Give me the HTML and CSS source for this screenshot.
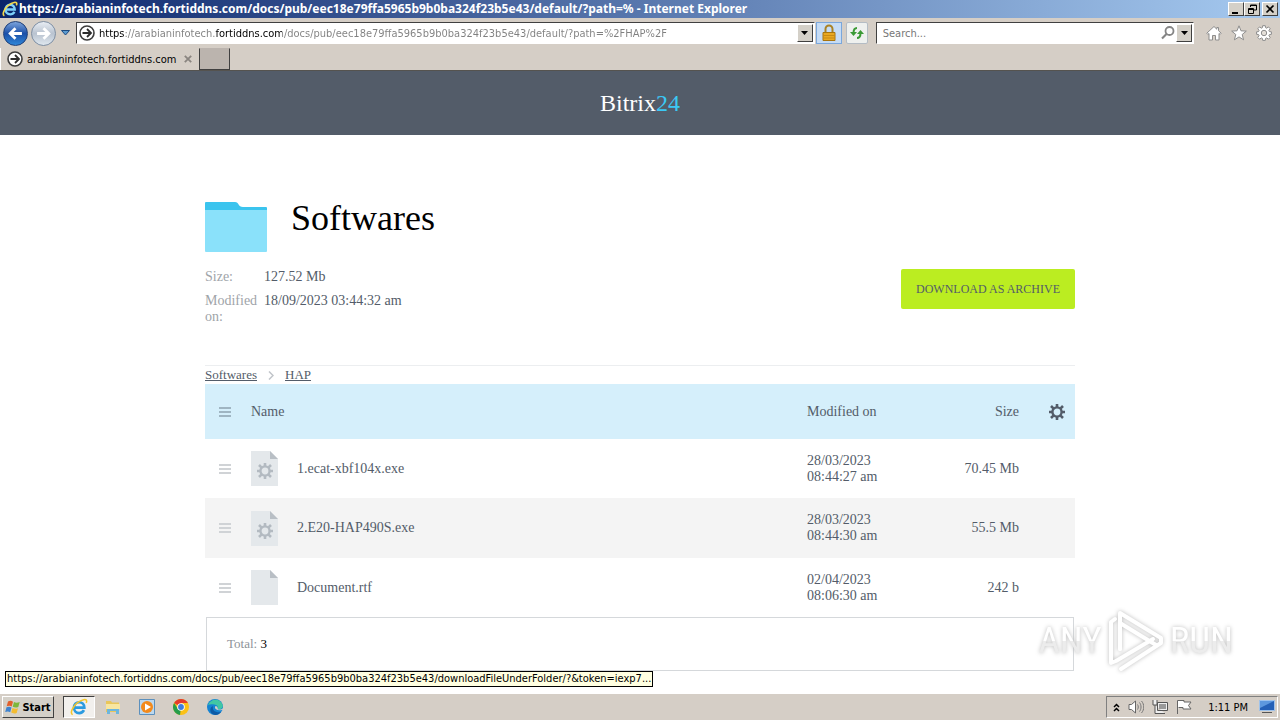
FILE: index.html
```html
<!DOCTYPE html>
<html lang="en">
<head>
  <meta charset="UTF-8">
  <title>Bitrix24 - Softwares</title>
  <link rel="stylesheet" href="styles.css">
</head>
<body>
  <svg class="symbols" aria-hidden="true">
    <symbol id="gear" viewBox="0 0 16 16">
      <g fill="none" stroke="currentColor">
        <circle cx="8" cy="8" r="4.6" stroke-width="2.4"/>
        <path stroke-width="2.6" d="M8 0v3M8 13v3M0 8h3M13 8h3M2 2l2.400 2.400M11.600 11.600l2.400 2.400M14 2l-2.400 2.400M4.400 11.600l-2.400 2.400"/>
      </g>
    </symbol>
    <symbol id="go" viewBox="0 0 16 16">
      <circle cx="8" cy="8" r="7" fill="#fff" stroke="#3c3c3c" stroke-width="1.6"/>
      <path d="M3.5 8h8M8 4l4 4-4 4" fill="none" stroke="#2c2c2c" stroke-width="1.8"/>
    </symbol>
    <symbol id="file" viewBox="0 0 27 35">
      <path fill="#e4e8eb" d="M0 0h19l8 8v27H0z"/>
      <path fill="#b9bfc5" d="M19 0l8 8h-8z"/>
    </symbol>
    <symbol id="ie" viewBox="0 0 20 20">
      <path d="M15.5 13.5c-1 2-3 3.200-5.300 3.200-3.300 0-5.800-2.600-5.800-6s2.500-6 5.800-6 5.700 2.500 5.700 6H5" fill="none" stroke="#2b9be0" stroke-width="3"/>
      <path d="M3 18.500C-.5 17 3 9.500 8 5.500S18.500.5 18.500 3.500c0 .8-.3 1.500-.6 2" fill="none" stroke="#f3c62c" stroke-width="1.700"/>
    </symbol>
    <symbol id="e-title" viewBox="0 0 20 20">
      <path d="M15.500 13.500c-1 2-3 3.200-5.300 3.200-3.300 0-5.800-2.600-5.800-6s2.500-6 5.800-6 5.700 2.500 5.700 6H5" fill="none" stroke="#7cd0fa" stroke-width="3"/>
      <path d="M3 18.500C-.5 17 3 9.500 8 5.500S18.500.5 18.500 3.500c0 .8-.3 1.500-.6 2" fill="none" stroke="#f3d84c" stroke-width="2"/>
    </symbol>
  </svg>

  <div class="titlebar">
    <svg class="icon16" viewBox="0 0 16 16"><use href="#e-title"/></svg>
    <span class="window-title">https://arabianinfotech.fortiddns.com/docs/pub/eec18e79ffa5965b9b0ba324f23b5e43/default/?path=% - Internet Explorer</span>
    <div class="window-buttons">
      <button class="win-btn" aria-label="Minimize"><svg viewBox="0 0 12 10"><path d="M2 8h6v2H2z"/></svg></button>
      <button class="win-btn" aria-label="Restore"><svg viewBox="0 0 12 10"><path fill="none" stroke="#000" d="M4.500 3V1h6v5H8M4 1.500h7M2.500 4.500h5v5h-5zM2 5.500h6"/></svg></button>
      <button class="win-btn close" aria-label="Close"><svg viewBox="0 0 12 10"><path fill="none" stroke="#000" stroke-width="1.700" d="M2.500 1.500l7 7M9.500 1.500l-7 7"/></svg></button>
    </div>
  </div>

  <div class="toolbar">
    <div class="history">
      <button class="nav-btn back" aria-label="Back"><svg viewBox="0 0 14 14"><path d="M7 2L2 7l5 5M2 7h11" fill="none" stroke="#fff" stroke-width="2.600"/></svg></button>
      <button class="nav-btn forward" aria-label="Forward"><svg viewBox="0 0 14 14"><path d="M7 2l5 5-5 5M12 7H1" fill="none" stroke="#fff" stroke-width="2.600"/></svg></button>
      <button class="recent" aria-label="Recent pages"><svg viewBox="0 0 9 6"><path d="M.5.5h8l-4 4.500z" fill="#5b9bd0" stroke="#1b4a80"/></svg></button>
    </div>
    <div class="field address">
      <svg class="icon16" viewBox="0 0 16 16"><use href="#go"/></svg>
      <input class="url" type="text" aria-label="Address" value="https://arabianinfotech.fortiddns.com/docs/pub/eec18e79ffa5965b9b0ba324f23b5e43/default/?path=%2FHAP%2F">
      <button class="drop" aria-label="Show address list"><svg viewBox="0 0 7 4"><path d="M0 0h7L3.500 4z"/></svg></button>
    </div>
    <button class="tool lock" aria-label="Security report"><svg viewBox="0 0 16 18"><path d="M4.500 9V5a3.500 3.500 0 0 1 7 0v4" fill="none" stroke="#a98225" stroke-width="2"/><path fill="#e9a820" stroke="#a8740f" d="M2 8.500h12v8H2z"/><path stroke="#c98a12" d="M2 11.500h12M2 14h12"/></svg></button>
    <button class="tool refresh" aria-label="Refresh"><svg viewBox="0 0 16 14"><path d="M8 2C5.500 2 4.500 3.500 4.500 7M8 12c2.500 0 3.500-1.500 3.500-5" fill="none" stroke="#3a9a35" stroke-width="2"/><path fill="#3a9a35" d="M1 6h7l-3.500 4zM8 8h7l-3.500-4z"/></svg></button>
    <div class="field search">
      <input type="text" aria-label="Search" placeholder="Search...">
      <svg class="icon16" viewBox="0 0 16 16"><circle cx="9.500" cy="6" r="4" fill="none" stroke="#858585" stroke-width="1.800"/><path d="M6.500 9L2 13.500" stroke="#858585" stroke-width="2.200"/></svg>
      <button class="drop" aria-label="Search options"><svg viewBox="0 0 7 4"><path d="M0 0h7L3.500 4z"/></svg></button>
    </div>
    <div class="commands">
      <button aria-label="Home"><svg viewBox="0 0 16 16"><path fill="#fff" stroke="#8d8d8d" d="M8 1.500L.8 8.200l1 1.200L3 8.500V15h3.500v-4.500h3V15H13V8.500l1.200.9 1-1.200-2.700-2.500V2.500h-1.700v1.700z"/></svg></button>
      <button aria-label="Favorites"><svg viewBox="0 0 16 16"><path fill="#fff" stroke="#8d8d8d" d="M8 .8l2 5 5.300.3-4.100 3.400 1.400 5.300L8 11.900l-4.600 2.900 1.400-5.300L.7 6.100 6 5.800z"/></svg></button>
      <button aria-label="Tools"><svg viewBox="0 0 16 16"><path fill="#fff" stroke="#8d8d8d" d="M6.700.7h2.600l.3 2 1.100.5 1.700-1.300 1.800 1.800-1.300 1.700.5 1.200 2 .2v2.500l-2 .3-.5 1.100 1.300 1.700-1.800 1.800-1.700-1.300-1.100.5-.3 2H6.700l-.3-2-1.100-.5-1.700 1.300-1.800-1.800 1.300-1.700-.5-1.100-2-.3V6.800l2-.2.5-1.200-1.300-1.700 1.800-1.800 1.700 1.300 1.100-.5z"/><circle cx="8" cy="8" r="2.700" fill="#e4dfd8" stroke="#8d8d8d"/></svg></button>
    </div>
  </div>

  <div class="tabs">
    <div class="tab">
      <svg class="icon16" viewBox="0 0 16 16"><use href="#go"/></svg>
      <span>arabianinfotech.fortiddns.com</span>
      <button class="tab-close" aria-label="Close tab"><svg viewBox="0 0 8 8"><path d="M.8.8l6.400 6.400M7.200.8L.8 7.200" stroke="#8a8580" stroke-width="1.800"/></svg></button>
    </div>
    <button class="new-tab" aria-label="New tab"></button>
  </div>

  <div class="page">
    <header class="site-header">
      <span class="logo">Bitrix<span>24</span></span>
    </header>

    <main class="content">
      <div class="folder-title">
        <svg viewBox="0 0 62 50"><path fill="#3bc4ee" d="M0 1a1 1 0 0 1 1-1h29c4 0 3 5 8 5h23a1 1 0 0 1 1 1v6H0z"/><path fill="#8ae1fa" d="M0 8h62v41a1 1 0 0 1-1 1H1a1 1 0 0 1-1-1z"/></svg>
        <h1>Softwares</h1>
      </div>

      <div class="info">
        <dl>
          <dt>Size:</dt><dd>127.52 Mb</dd>
          <dt>Modified on:</dt><dd>18/09/2023 03:44:32 am</dd>
        </dl>
        <a class="download" href="#">DOWNLOAD AS ARCHIVE</a>
      </div>

      <nav class="breadcrumbs">
        <a href="#">Softwares</a>
        <svg viewBox="0 0 6 9"><path d="M1 .5l4 4-4 4" fill="none" stroke="#c0c4c9" stroke-width="1.500"/></svg>
        <a href="#">HAP</a>
      </nav>

      <table class="files">
        <thead>
          <tr>
            <th class="menu"><svg class="lines" viewBox="0 0 12 10"><path d="M0 1h12M0 5h12M0 9h12"/></svg></th>
            <th>Name</th>
            <th class="date">Modified on</th>
            <th class="size">Size</th>
            <th class="settings"><button aria-label="Settings"><svg viewBox="0 0 16 16"><use href="#gear"/></svg></button></th>
          </tr>
        </thead>
        <tbody>
          <tr>
            <td class="menu"><svg class="lines" viewBox="0 0 12 10"><path d="M0 1h12M0 5h12M0 9h12"/></svg></td>
            <td><div class="name"><svg class="file-icon" viewBox="0 0 27 35"><use href="#file"/><use href="#gear" x="6" y="12" width="16" height="16"/></svg><span>1.ecat-xbf104x.exe</span></div></td>
            <td class="date">28/03/2023<br>08:44:27 am</td>
            <td class="size">70.45 Mb</td>
            <td></td>
          </tr>
          <tr>
            <td class="menu"><svg class="lines" viewBox="0 0 12 10"><path d="M0 1h12M0 5h12M0 9h12"/></svg></td>
            <td><div class="name"><svg class="file-icon" viewBox="0 0 27 35"><use href="#file"/><use href="#gear" x="6" y="12" width="16" height="16"/></svg><span>2.E20-HAP490S.exe</span></div></td>
            <td class="date">28/03/2023<br>08:44:30 am</td>
            <td class="size">55.5 Mb</td>
            <td></td>
          </tr>
          <tr>
            <td class="menu"><svg class="lines" viewBox="0 0 12 10"><path d="M0 1h12M0 5h12M0 9h12"/></svg></td>
            <td><div class="name"><svg class="file-icon" viewBox="0 0 27 35"><use href="#file"/></svg><span>Document.rtf</span></div></td>
            <td class="date">02/04/2023<br>08:06:30 am</td>
            <td class="size">242 b</td>
            <td></td>
          </tr>
        </tbody>
      </table>
      <div class="total">Total: <b>3</b></div>
    </main>

    <div class="watermark">
      <span>ANY</span>
      <svg viewBox="0 0 58 64"><g fill="none" stroke="#fff" stroke-width="4" stroke-linejoin="round" stroke-linecap="round"><path d="M13 40V4l41 25v5L14 60"/><path d="M13 14l36 22M13 40V20"/><path d="M8 10l-4 3v41l5-2 37-22"/></g></svg>
      <span>RUN</span>
    </div>
    <div class="status">https://arabianinfotech.fortiddns.com/docs/pub/eec18e79ffa5965b9b0ba324f23b5e43/downloadFileUnderFolder/?&amp;token=iexp7...</div>
  </div>

  <footer class="taskbar">
    <button class="start"><svg viewBox="0 0 16 16"><path fill="#e2602c" d="M3 2.500c2-1 3.500-.8 5 .2L6.700 7.500c-1.500-1-3-1-5-.3z"/><path fill="#7db73b" d="M9 3c1.500 1 3.500 1 5.700 0L13.300 8C11 8.800 9.500 8.600 7.700 7.700z"/><path fill="#3f83cf" d="M1.500 8.300c2-.7 3.500-.7 5 .3l-1.300 4.700c-1.700-1-3-1-5-.2z"/><path fill="#f3bc31" d="M7.500 9c1.700.8 3.300 1 5.500.2l-1.300 4.700c-2 .8-4 .6-5.500-.3z"/></svg>Start</button>
    <button class="task active" aria-label="Internet Explorer"><svg viewBox="0 0 16 16"><use href="#ie"/></svg></button>
    <button class="task" aria-label="Explorer"><svg viewBox="0 0 16 16"><path fill="#e9c65a" d="M1 2h5l1 1.500h7V13H1z"/><path fill="#f8e6a0" d="M1 5h14v5H1z"/><path fill="#6db6dd" d="M2 15v-5h12v5h-3v-3H5v3z"/></svg></button>
    <button class="task" aria-label="Media Player"><svg viewBox="0 0 16 16"><path fill="#bcd8ee" stroke="#5c90bd" d="M.5.5h15v15H.5z"/><circle cx="8" cy="8" r="6" fill="#f38a1b"/><path fill="#fff" d="M6 4.500v7L12 8z"/></svg></button>
    <button class="task" aria-label="Chrome"><svg viewBox="0 0 16 16"><circle cx="8" cy="8" r="8" fill="#fbc116"/><path fill="#e33b2e" d="M8 8L1.100 4A8 8 0 0 1 14.900 4H8z"/><path fill="#269d4c" d="M8 8l-1 8A8 8 0 0 1 1.100 4L5 10z"/><circle cx="8" cy="8" r="3.800" fill="#fff"/><circle cx="8" cy="8" r="2.900" fill="#3d7de0"/></svg></button>
    <button class="task" aria-label="Edge"><svg viewBox="0 0 16 16"><circle cx="8" cy="8" r="8" fill="#1583d2"/><path fill="#41c7a4" d="M1 6C3 0 13-2 15.700 6c.6 3-2 5-5.200 4 1-2 0-4-3-4.500C5 5 3 5 1 6z"/><path fill="#0d5aa5" d="M6 7c-1 4 2 7 8 6-3 4-8 3.500-10 .5C2.500 11 3.500 8 6 7z"/><path fill="#d5d0c8" d="M8.500 7c-1.500 2 0 5 6.500 4l1.500-.5V8.500c-1 1.800-3.500 2.500-5.700 1.700C11 8.500 10 7 8.500 7z"/></svg></button>
    <div class="tray">
      <svg class="more" viewBox="0 0 7 9"><path d="M1 4l2.500-2.500L6 4M1 8l2.500-2.500L6 8" fill="none" stroke="#000" stroke-width="1.500"/></svg>
      <svg class="icon16" viewBox="0 0 16 16"><path fill="#fff" stroke="#666" d="M1 5.500h2.500L7.500 2v12l-4-3.500H1z"/><path fill="none" stroke="#777" d="M9.500 5.500c1 1.500 1 3.500 0 5M11.500 3.500c2 2.500 2 6.500 0 9M13.500 2c3 3.500 3 8.500 0 12"/></svg>
      <svg class="icon16" viewBox="0 0 16 16"><path fill="#eee" stroke="#555" d="M5.500 3.500h10v8h-10zM1 1v5h4V1M3 6v8.500h10"/><path fill="#999" d="M7 5h7v5H7z"/></svg>
      <svg class="icon16" viewBox="0 0 16 16"><path fill="#fff" stroke="#666" d="M1.500 15V1.500H8V3h7l-2.500 3.500L15 10H7V8.500H2.500"/></svg>
      <span class="clock">1:11 PM</span>
      <button class="show-desktop" aria-label="Show desktop"><svg viewBox="0 0 16 14"><path fill="#2561b7" stroke="#9fc3ec" d="M.5.500h15v10H.5z"/><path fill="#5d98de" d="M1 1h14L1 8z"/><path fill="#555" d="M3 12h10v1H3z"/></svg></button>
    </div>
  </footer>
</body>
</html>
```

FILE: styles.css
```css
* {
  box-sizing: border-box;
}

body {
  margin: 0;
  height: 100vh;
  display: flex;
  flex-direction: column;
  overflow: hidden;
  font-family: "DejaVu Sans Condensed", "DejaVu Sans", sans-serif;
  font-size: 11px;
  color: #000;
  background-color: #d5cec6;
}

button {
  display: flex;
  align-items: center;
  justify-content: center;
  padding: 0;
  border: none;
  background: none;
  font: inherit;
}

svg {
  display: block;
  flex: none;
}

.symbols {
  position: absolute;
  width: 0;
  height: 0;
}

.icon16 {
  width: 16px;
  height: 16px;
}

/* window frame */
.titlebar {
  display: flex;
  align-items: center;
  height: 18px;
  padding: 0 2px;
  gap: 1px;
  background: linear-gradient(to right, #0a246a, #a6caf0);
  color: #fff;
  font-weight: bold;
}

.window-title {
  flex: 1;
  overflow: hidden;
  font-family: "Noto Sans", sans-serif;
  font-size: 12px;
  line-height: 18px;
  white-space: nowrap;
}

.window-buttons {
  display: flex;
}

.win-btn,
.drop,
.start {
  background-color: #d4d0c8;
  border: 1px solid;
  border-color: #fff #404040 #404040 #fff;
}

.win-btn {
  width: 16px;
  height: 14px;
}

.win-btn svg {
  width: 12px;
  height: 10px;
}

.close {
  margin-left: 2px;
}

.toolbar {
  display: flex;
  align-items: center;
  height: 30px;
  padding: 0 8px 0 3px;
}

.history {
  display: flex;
  align-items: center;
  width: 73px;
  gap: 3px;
}

.nav-btn {
  width: 25px;
  height: 25px;
  border: 1px solid #7d8ea3;
  border-radius: 50%;
}

.nav-btn svg {
  width: 15px;
  height: 15px;
}

.back {
  background: linear-gradient(#7ba3dc, #1c50a8 50%, #2f86d8);
  border-color: #1f3f78;
}

.forward {
  background: linear-gradient(#e8edf3, #b9c3d0 50%, #dfe7ee);
}

.recent {
  margin-left: 2px;
}

.recent svg {
  width: 9px;
  height: 6px;
}

.field {
  display: flex;
  align-items: center;
  height: 22px;
  padding: 0 1px 0 2px;
  background-color: #fff;
  border: 1px solid;
  border-color: #404040 #fff #fff #404040;
}

.field input {
  flex: 1;
  min-width: 0;
  padding: 0 4px;
  border: none;
  outline: none;
  font: inherit;
}

.address {
  flex: 740;
}

/* the registered domain is darker than the rest of the address */
.address .url {
  background: linear-gradient(to right, #000 30px, #808080 30px, #808080 120px, #000 120px, #000 187px, #808080 187px);
  background-clip: text;
  -webkit-background-clip: text;
  -webkit-text-fill-color: transparent;
}

.search {
  flex: 316;
  margin-left: 8px;
}

.search input::placeholder {
  color: #777;
}

.drop {
  width: 16px;
  height: 18px;
}

.drop svg {
  width: 7px;
  height: 4px;
}

.tool {
  height: 22px;
  border: 1px solid #b4bcc4;
}

.lock {
  width: 26px;
  margin-left: 1px;
  background-color: #c6dcf5;
  border-color: #7aa7dc;
}

.lock svg {
  width: 16px;
  height: 18px;
}

.refresh {
  width: 22px;
  margin-left: 4px;
  background-color: #eef0ee;
  border-radius: 2px;
}

.refresh svg {
  width: 16px;
  height: 14px;
}

.commands {
  display: flex;
  gap: 9px;
  margin-left: 12px;
}

.commands svg {
  width: 16px;
  height: 16px;
}

.tabs {
  display: flex;
  height: 23px;
  border-bottom: 1px solid #55534f;
}

.tab {
  display: flex;
  align-items: center;
  width: 199px;
  padding: 0 7px 0 6px;
  gap: 4px;
  border-left: 1px solid #fff;
}

.tab-close {
  margin-left: auto;
}

.tab-close svg {
  width: 8px;
  height: 8px;
}

.new-tab {
  width: 31px;
  background-color: #bbb4ae;
  border: 1px solid #404040;
  border-top-color: #bbb4ae;
}

/* page */
.page {
  position: relative;
  flex: 1;
  overflow: hidden;
  background-color: #fff;
  font-family: "Liberation Serif", serif;
  font-size: 14px;
  line-height: 16px;
  color: #535c69;
}

.site-header {
  display: flex;
  align-items: center;
  justify-content: center;
  height: 64px;
  background-color: #535c69;
}

.logo {
  font-size: 24px;
  line-height: 28px;
  color: #fff;
}

.logo span {
  color: #3bc8f5;
}

.content {
  max-width: 870px;
  margin: 0 auto;
  padding-top: 61px;
}

.folder-title {
  display: flex;
  align-items: flex-end;
  gap: 24px;
}

.folder-title svg {
  width: 62px;
  height: 50px;
}

.folder-title h1 {
  margin: 0;
  padding-bottom: 11px;
  font-size: 36px;
  font-weight: normal;
  line-height: 45px;
  color: #000;
}

.info {
  display: flex;
  align-items: flex-start;
  justify-content: space-between;
  padding: 17px 0 40px;
}

.info dl {
  display: grid;
  grid-template-columns: 53px auto;
  gap: 8px 6px;
  margin: 0;
}

.info dt {
  color: #a0a4a9;
}

.info dd {
  margin: 0;
}

.download {
  padding: 12px 15px;
  border-radius: 2px;
  background-color: #bbed21;
  color: #535c69;
  font-size: 12px;
  text-decoration: none;
}

.breadcrumbs {
  display: flex;
  align-items: center;
  gap: 11px;
  height: 19px;
  border-top: 1px solid #eceef0;
  font-size: 13px;
}

.breadcrumbs a {
  color: #535c69;
}

.breadcrumbs svg {
  width: 6px;
  height: 9px;
}

.files {
  width: 100%;
  border-collapse: collapse;
}

.files th {
  height: 55px;
  padding: 0;
  background-color: #d5effb;
  font-weight: normal;
  text-align: left;
}

.files td {
  height: 59px;
  padding: 0;
}

.files tbody tr:nth-child(even) {
  background-color: #f4f4f4;
}

.files tbody tr:nth-child(even) td {
  height: 60px;
}

.files .menu {
  width: 46px;
  padding-left: 14px;
}

.lines {
  width: 12px;
  height: 10px;
  stroke: #d0d3d6;
  stroke-width: 2;
}

th .lines {
  stroke: #9fb5c2;
}

.name {
  display: flex;
  align-items: center;
  gap: 19px;
}

.file-icon {
  width: 27px;
  height: 35px;
  color: #b3bac1;
}

.files .date {
  width: 90px;
}

.files .size {
  width: 122px;
  text-align: right;
}

.files .settings {
  width: 56px;
}

.settings button {
  margin-left: auto;
  margin-right: 10px;
  color: #535c69;
}

.settings svg {
  width: 16px;
  height: 16px;
}

.total {
  margin: 0 1px;
  padding: 18px 20px;
  border: 1px solid #d5d8db;
  color: #8d9299;
  font-size: 13px;
}

.total b {
  color: #000;
  font-weight: normal;
}

.watermark {
  position: absolute;
  right: 47px;
  bottom: 20px;
  display: flex;
  align-items: center;
  gap: 5px;
  font-family: "Liberation Sans Narrow", "Roboto Condensed", "Open Sans Condensed", Roboto, sans-serif;
  font-size: 37px;
  line-height: 40px;
  color: #fff;
  filter: drop-shadow(0 0 2px #bbb);
}

.watermark span {
  background: linear-gradient(#fff 50%, #ececec 50%);
  background-clip: text;
  -webkit-background-clip: text;
  color: transparent;
}

.watermark svg {
  width: 58px;
  height: 64px;
}

.status {
  position: absolute;
  left: 5px;
  bottom: 6px;
  padding: 0 1px;
  border: 1px solid #000;
  background-color: #ffffe1;
  color: #000;
  font-family: "DejaVu Sans Condensed", "DejaVu Sans", sans-serif;
  font-size: 11px;
  line-height: 14px;
  white-space: nowrap;
}

/* taskbar */
.taskbar {
  display: flex;
  align-items: center;
  height: 27px;
  padding: 0 2px;
  border-top: 1px solid #fff;
  background-color: #d5cec6;
}

.start {
  height: 22px;
  width: 52px;
  gap: 1px;
  margin-right: 9px;
  font-weight: bold;
}

.start svg {
  width: 16px;
  height: 16px;
}

.task {
  width: 32px;
  height: 22px;
  margin-right: 2px;
}

.task svg {
  width: 16px;
  height: 16px;
}

.active {
  background-color: #f2f0ed;
  border: 1px solid;
  border-color: #404040 #fff #fff #404040;
}

.active svg {
  width: 18px;
  height: 18px;
}

.tray {
  display: flex;
  align-items: center;
  height: 22px;
  margin-left: auto;
  padding: 0 2px 0 6px;
  gap: 8px;
  border: 1px solid;
  border-color: #808080 #fff #fff #808080;
}

.more {
  width: 7px;
  height: 9px;
}

.clock {
  margin: 0 3px 0 8px;
}

.show-desktop svg {
  width: 16px;
  height: 14px;
}
```
